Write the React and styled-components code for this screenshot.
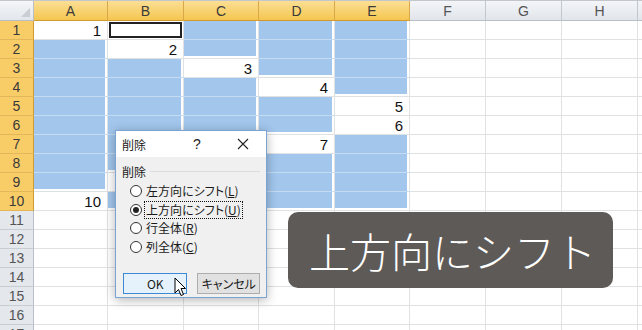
import styled, { createGlobalStyle } from "styled-components";

const GlobalStyle = createGlobalStyle`
  html, body {
    margin: 0;
    padding: 0;
    background: #fff;
    overflow: hidden;
  }
`;

const COLS = ["A", "B", "C", "D", "E", "F", "G", "H", ""];
const ROWS = Array.from({ length: 17 }, (_, i) => i + 1);
const VALUES = { A1: 1, B2: 2, C3: 3, D4: 4, E5: 5, E6: 6, D7: 7, C8: 8, B9: 9, A10: 10 };

const inBlock = (c, r) => c < 5 && r <= 10;
const isActive = (c, r) => c === 1 && r === 1;
const isSel = (c, r) =>
  inBlock(c, r) && VALUES[COLS[c] + r] === undefined && !isActive(c, r);

const Screen = styled.div`
  position: relative;
  width: 642px;
  height: 330px;
  overflow: hidden;
  background: #fff;
`;

const Sheet = styled.div`
  display: grid;
  grid-template-columns: 34px 74px 76px 75px 76px 75px 76px 76px 76px 1fr;
  grid-template-rows: 20px repeat(17, 19px);
  border-top: 1px solid #c3c7cc;
  font-family: "Liberation Sans", Arial, sans-serif;
`;

const Corner = styled.div`
  position: relative;
  background: linear-gradient(#f4f6f8, #e2e6eb);
  border-right: 1px solid #b9bfc7;
  border-bottom: 1px solid #b9bfc7;
  &::after {
    content: "";
    position: absolute;
    right: 3px;
    bottom: 3px;
    border-style: solid;
    border-width: 0 0 9px 9px;
    border-color: transparent transparent #c9ced5 transparent;
  }
`;

const ColHead = styled.div`
  display: flex;
  align-items: center;
  justify-content: center;
  font-size: 14px;
  color: ${(p) => (p.$hl ? "#3a3a3a" : "#555")};
  background: ${(p) =>
    p.$hl ? "linear-gradient(#fbdf95, #f5c650)" : "linear-gradient(#f3f5f8, #e1e5ea)"};
  border-right: 1px solid ${(p) => (p.$hl ? "#d9a949" : "#c2c7ce")};
  border-bottom: 1px solid ${(p) => (p.$hl ? "#d09a32" : "#b9bfc7")};
`;

const RowHead = styled.div`
  display: flex;
  align-items: center;
  justify-content: center;
  font-size: 14px;
  color: ${(p) => (p.$hl ? "#3a3a3a" : "#555")};
  background: ${(p) => (p.$hl ? "#f8cd68" : "#e4e7ec")};
  border-right: 1px solid ${(p) => (p.$hl ? "#d09a32" : "#b9bfc7")};
  border-bottom: 1px solid ${(p) => (p.$hl ? "#e2b75a" : "#c8ccd3")};
`;

const Cell = styled.div`
  display: flex;
  align-items: center;
  justify-content: flex-end;
  padding-right: 6px;
  font-size: 15px;
  color: #111;
  background: ${(p) => (p.$sel ? "#a2c6ec" : "#fff")};
  border-right: 1px solid #dfe1e2;
  border-bottom: 1px solid ${(p) => (p.$sel && !p.$end ? "#c5dbf2" : "#dfe1e2")};
  box-shadow: ${(p) =>
    p.$active
      ? "inset 0 0 0 1px #fff, inset 0 0 0 3px #222"
      : p.$sel
      ? p.$end
        ? "inset -2px -2px 0 #fff"
        : "inset -2px 0 0 #fff"
      : "none"};
`;

/* dialog */
const Dialog = styled.div`
  position: absolute;
  left: 115px;
  top: 130px;
  width: 152px;
  height: 168px;
  box-sizing: border-box;
  display: flex;
  flex-direction: column;
  background: #f0f0f0;
  border: 1px solid #7ba3d3;
  box-shadow: 0 2px 10px rgba(0, 0, 0, 0.3);
  font-family: "Noto Sans CJK JP", "Noto Sans", sans-serif;
  font-feature-settings: "palt";
  color: #1a1a1a;
`;

const TitleBar = styled.div`
  height: 26px;
  display: flex;
  align-items: center;
  background: #fff;
  font-size: 12px;
`;

const Title = styled.span`
  flex: 1;
  padding-left: 6px;
`;

const TitleBtn = styled.span`
  width: 46px;
  display: flex;
  align-items: center;
  justify-content: center;
  font-size: 14px;
  font-family: "Liberation Sans", Arial, sans-serif;
  color: #222;
`;

const Body = styled.div`
  display: flex;
  flex-direction: column;
  padding: 6px 6px 0;
`;

const GroupHead = styled.div`
  height: 16px;
  display: flex;
  align-items: center;
  gap: 4px;
  font-size: 12px;
  &::after {
    content: "";
    flex: 1;
    height: 1px;
    background: #dcdcdc;
  }
`;

const RadioList = styled.div`
  margin-top: 3px;
  padding-left: 8px;
  display: flex;
  flex-direction: column;
`;

const RadioRow = styled.div`
  height: 18.5px;
  display: flex;
  align-items: center;
  gap: 2px;
  font-size: 12px;
`;

const Radio = styled.span`
  width: 12px;
  height: 12px;
  box-sizing: border-box;
  border-radius: 50%;
  border: 1px solid #333;
  background: #fff;
  display: flex;
  align-items: center;
  justify-content: center;
  &::after {
    content: "";
    width: 6px;
    height: 6px;
    border-radius: 50%;
    background: ${(p) => (p.$on ? "#222" : "transparent")};
  }
`;

const Label = styled.span`
  padding: 0 1px;
  line-height: 16px;
  outline: ${(p) => (p.$focus ? "1px dotted #111" : "none")};
  outline-offset: 0;
  margin-left: 1px;
`;

const Key = styled.u`
  text-underline-offset: 1px;
`;

const Buttons = styled.div`
  display: flex;
  gap: 10px;
  margin-top: 17px;
  padding-left: 1px;
`;

const Btn = styled.div`
  width: ${(p) => p.$w}px;
  height: 21px;
  box-sizing: border-box;
  display: flex;
  align-items: center;
  justify-content: center;
  font-size: 12px;
  background: ${(p) => (p.$primary ? "#e5f1fb" : "#e1e1e1")};
  border: 1px solid ${(p) => (p.$primary ? "#3c8ad6" : "#adadad")};
`;

const Cursor = styled.svg`
  position: absolute;
  left: 58px;
  top: 146px;
`;

/* caption */
const Caption = styled.div`
  position: absolute;
  left: 288px;
  top: 212px;
  width: 325px;
  height: 76px;
  border-radius: 10px;
  background: rgba(84, 80, 77, 0.94);
  display: flex;
  align-items: center;
  justify-content: center;
  padding-left: 4px;
  box-sizing: border-box;
  color: #fff;
  font-family: "Noto Sans CJK JP", sans-serif;
  font-weight: 300;
  font-size: 41px;
  letter-spacing: 0;
`;

const OPTIONS = [
  { text: "左方向にシフト", key: "L" },
  { text: "上方向にシフト", key: "U", on: true },
  { text: "行全体", key: "R" },
  { text: "列全体", key: "C" },
];

export default function App() {
  const cells = [];
  cells.push(<Corner key="corner" />);
  COLS.forEach((c, i) =>
    cells.push(
      <ColHead key={"h" + i} $hl={i < 5}>
        {c}
      </ColHead>
    )
  );
  ROWS.forEach((r) => {
    cells.push(
      <RowHead key={"r" + r} $hl={r <= 10}>
        {r}
      </RowHead>
    );
    COLS.forEach((c, i) => {
      const sel = isSel(i, r);
      const end = sel && !isSel(i, r + 1);
      cells.push(
        <Cell key={c + i + "-" + r} $sel={sel} $end={end} $active={isActive(i, r)}>
          {VALUES[c + r]}
        </Cell>
      );
    });
  });

  return (
    <Screen>
      <GlobalStyle />
      <Sheet>{cells}</Sheet>

      <Dialog>
        <TitleBar>
          <Title>削除</Title>
          <TitleBtn>?</TitleBtn>
          <TitleBtn>
            <svg width="12" height="12" viewBox="0 0 12 12">
              <path d="M1 1 L11 11 M11 1 L1 11" stroke="#222" strokeWidth="1.1" />
            </svg>
          </TitleBtn>
        </TitleBar>
        <Body>
          <GroupHead>削除</GroupHead>
          <RadioList>
            {OPTIONS.map((o) => (
              <RadioRow key={o.key}>
                <Radio $on={o.on} />
                <Label $focus={o.on}>
                  {o.text}(<Key>{o.key}</Key>)
                </Label>
              </RadioRow>
            ))}
          </RadioList>
          <Buttons>
            <Btn $w={65} $primary>
              OK
            </Btn>
            <Btn $w={63}>キャンセル</Btn>
          </Buttons>
        </Body>
        <Cursor width="14" height="21" viewBox="0 0 14 21">
          <path
            d="M1 1 L1 16 L4.5 12.5 L7 18.5 L9.5 17.5 L7 11.5 L11.5 11.5 Z"
            fill="#fff"
            stroke="#000"
            strokeWidth="1"
            strokeLinejoin="round"
          />
        </Cursor>
      </Dialog>

      <Caption>上方向にシフト</Caption>
    </Screen>
  );
}
